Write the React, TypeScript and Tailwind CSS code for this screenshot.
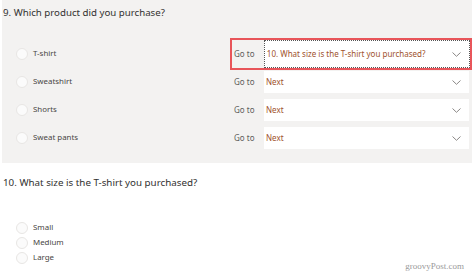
import React from 'react';

const options = [
  { label: 'T-shirt', target: '10. What size is the T-shirt you purchased?', highlight: true },
  { label: 'Sweatshirt', target: 'Next', highlight: false },
  { label: 'Shorts', target: 'Next', highlight: false },
  { label: 'Sweat pants', target: 'Next', highlight: false },
];

const sizes = ['Small', 'Medium', 'Large'];

function Chevron() {
  return (
    <svg width="9" height="5" viewBox="0 0 9 5" className="shrink-0">
      <path d="M0.5 0.5 L4.5 4.3 L8.5 0.5" fill="none" stroke="#8a8886" strokeWidth="1" />
    </svg>
  );
}

function Radio() {
  return <span className="block w-[12px] h-[12px] rounded-full border border-[#e8e6e4] bg-[#fbfbfb] shrink-0" />;
}

export default function App() {
  return (
    <div className="w-[474px] h-[277px] bg-white relative overflow-hidden font-['Noto_Sans',sans-serif] text-[#323130]">
      {/* question 9 with branching */}
      <section className="ml-[2px] w-[470px] h-[163px] bg-[#f3f2f1] pt-[2px]">
        <h2 className="pl-[1px] text-[9.7px] leading-[22px]">9. Which product did you purchase?</h2>
        <div className="mt-[16px] flex flex-col">
          {options.map((o) => (
            <div key={o.label} className="flex items-center h-[28px]">
              <div className="flex items-center gap-[5px] pl-[14px] w-[228px] text-[7.9px] text-[#484644]">
                <Radio />
                <span>{o.label}</span>
              </div>
              <div
                className={`flex items-center shrink-0 w-[242px] pl-[2px] ${
                  o.highlight ? 'h-[32px] border-2 border-[#e8555a]' : 'h-[28px] border-2 border-transparent'
                }`}
              >
                <span className="w-[30px] text-[8px] text-[#605e5c]">Go to</span>
                <div
                  className={`flex items-center justify-between pl-[2px] pr-[8px] bg-white text-[8px] text-[#a0522d] ${
                    o.highlight ? 'w-[207px] h-[28px] border border-dotted border-[#555]' : 'w-[205px] h-[22px]'
                  }`}
                >
                  <span>{o.target}</span>
                  <Chevron />
                </div>
              </div>
            </div>
          ))}
        </div>
      </section>

      {/* question 10 */}
      <section className="pl-[3px]">
        <h2 className="mt-[13px] text-[9.8px] leading-[14px]">10. What size is the T-shirt you purchased?</h2>
        <div className="mt-[30px] flex flex-col">
          {sizes.map((s) => (
            <div key={s} className="flex items-center gap-[5px] pl-[13px] h-[15px] text-[7.9px] text-[#484644]">
              <Radio />
              <span>{s}</span>
            </div>
          ))}
        </div>
      </section>

      <span className="absolute right-[10px] bottom-[4px] font-['Liberation_Serif',serif] text-[9px] text-[#9a9a9a]">
        groovyPost.com
      </span>
    </div>
  );
}
